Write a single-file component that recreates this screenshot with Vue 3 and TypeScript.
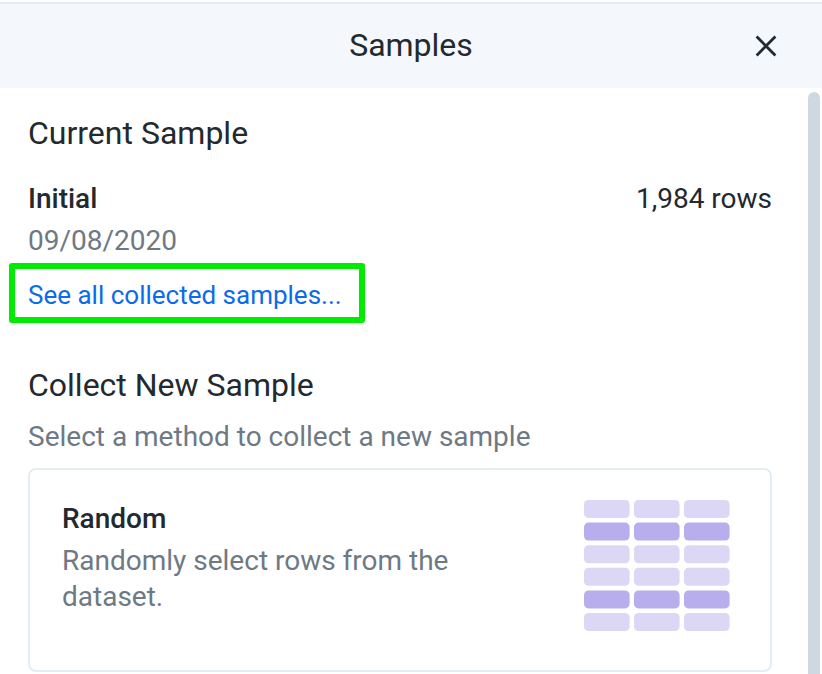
<script setup lang="ts">
interface Cell {
  id: string
  x: number
  y: number
  selected: boolean
}

const selectedRows = [false, true, false, false, true, false]

const cells: Cell[] = selectedRows.flatMap((selected, row) =>
  [0, 1, 2].map((column) => ({
    id: `${row}-${column}`,
    x: column * 50,
    y: row * 22.6,
    selected,
  })),
)
</script>

<template>
  <div class="panel">
    <header class="header">
      <h1 class="title">Samples</h1>
      <button class="close" type="button" aria-label="Close">
        <svg viewBox="0 0 24 24" width="24" height="24" aria-hidden="true">
          <path d="M2.6 2.6 21.4 21.4M21.4 2.6 2.6 21.4" fill="none" stroke="currentColor" stroke-width="2.8" />
        </svg>
      </button>
    </header>

    <div class="body">
      <main class="content">
        <section class="current">
          <h2 class="heading">Current Sample</h2>
          <div class="summary">
            <strong class="name">Initial</strong>
            <span>1,984 rows</span>
          </div>
          <p class="text">09/08/2020</p>
          <a class="link" href="#samples">See all collected samples...</a>
        </section>

        <section>
          <h2 class="heading">Collect New Sample</h2>
          <p class="text hint">Select a method to collect a new sample</p>
          <button class="card" type="button">
            <span class="description">
              <strong class="name">Random</strong>
              <span class="text">Randomly select rows from the dataset.</span>
            </span>
            <svg class="pictogram" viewBox="0 0 146 131" width="146" height="131" aria-hidden="true">
              <rect
                v-for="cell in cells"
                :key="cell.id"
                class="cell"
                :class="{ selected: cell.selected }"
                :x="cell.x"
                :y="cell.y"
                width="45.6"
                height="18"
                rx="4.5"
              />
            </svg>
          </button>
        </section>
      </main>
      <div class="track"><div class="thumb"></div></div>
    </div>
  </div>
</template>

<style>
body {
  margin: 0;
  background: #fff;
}
</style>

<style scoped>
.panel {
  display: flex;
  flex-direction: column;
  height: 100vh;
  overflow: hidden;
  box-sizing: border-box;
  border-top: 2px solid #fff;
  font-family: Roboto, sans-serif;
  font-size: 28px;
  line-height: 36px;
  color: #22292f;
}

.header {
  display: grid;
  grid-template-columns: 48px 1fr 48px;
  flex: none;
  align-items: center;
  padding: 18px 32px;
  border-top: 2px solid #e4ecf4;
  background: #f4f7fc;
}

.title {
  grid-column: 2;
  margin: 0;
  font-size: 32px;
  font-weight: 400;
  line-height: 38px;
  padding-bottom: 2px;
  text-align: center;
}

.close {
  display: grid;
  place-items: center;
  width: 48px;
  height: 48px;
  padding: 0;
  border: 0;
  background: none;
  color: inherit;
}

.body {
  display: flex;
  flex: 1;
  min-height: 0;
}

.content {
  flex: 1;
  min-width: 0;
  padding: 25px 36px 0 28px;
}

.track {
  flex: none;
  width: 14px;
  padding-top: 4px;
  overflow: hidden;
}

.thumb {
  width: 12px;
  height: 120%;
  border-radius: 6px;
  background: #ced8e3;
}

.current {
  margin-bottom: 42px;
}

.heading {
  margin: 0;
  font-size: 32px;
  font-weight: 400;
  line-height: 40px;
}

.summary {
  display: flex;
  justify-content: space-between;
  margin: 28px 0 6px;
}

.name {
  font-weight: 500;
}

.text {
  margin: 0;
  color: #6e7984;
}

.link {
  display: block;
  width: fit-content;
  margin: 4px 0 0 -19px;
  padding: 11px 17px 7px 13px;
  border: 6px solid #00eb00;
  border-radius: 3px;
  font-size: 26px;
  line-height: 30px;
  color: #0b6bea;
  text-decoration: none;
}

.hint {
  margin: 14px 0 13px;
}

.card {
  display: flex;
  align-items: flex-start;
  justify-content: space-between;
  width: 100%;
  padding: 30px 40px 39px 32px;
  box-sizing: border-box;
  border: 2px solid #e4ecf4;
  border-radius: 8px;
  background: #fff;
  color: inherit;
  font: inherit;
  text-align: left;
}

.description {
  display: flex;
  flex-direction: column;
  gap: 5px;
  width: 420px;
}

.description .name {
  line-height: 38px;
}

.pictogram {
  display: block;
  flex: none;
}

.cell {
  fill: #dcd7f5;
}

.cell.selected {
  fill: #b8aeed;
}
</style>
